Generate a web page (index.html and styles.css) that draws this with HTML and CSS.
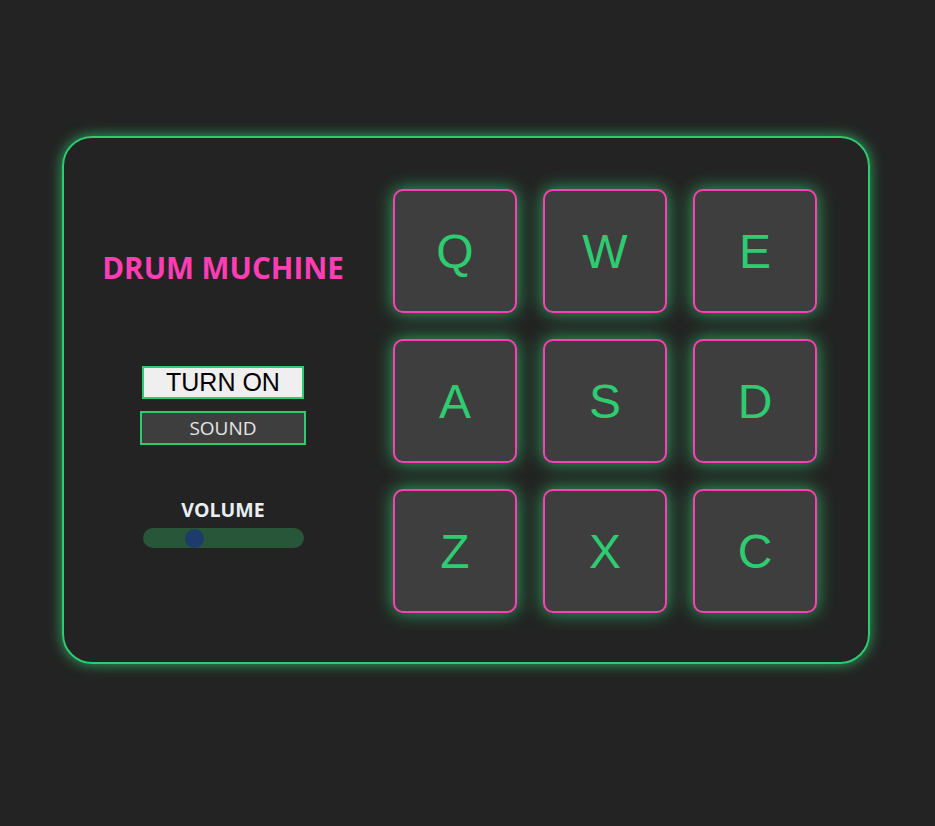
FILE: index.html
```html
<!DOCTYPE html>
<html>
<head>
<meta charset="utf-8">
<link rel="stylesheet" href="styles.css">
</head>
<body>
<div class="machine">
  <div class="controls">
    <h1 class="title">DRUM MUCHINE</h1>
    <button class="power">TURN ON</button>
    <div class="display">SOUND</div>
    <div class="volume-label">VOLUME</div>
    <div class="slider"><span class="thumb"></span></div>
  </div>
  <div class="pads">
    <div class="pad">Q</div>
    <div class="pad">W</div>
    <div class="pad">E</div>
    <div class="pad">A</div>
    <div class="pad">S</div>
    <div class="pad">D</div>
    <div class="pad">Z</div>
    <div class="pad">X</div>
    <div class="pad">C</div>
  </div>
</div>
</body>
</html>
```
FILE: styles.css
```css
html, body {
  margin: 0;
  padding: 0;
  background: #232323;
  height: 100%;
}
body {
  padding-top: 136px;
  padding-left: 62px;
  box-sizing: border-box;
}
.machine {
  width: 808px;
  height: 528px;
  box-sizing: border-box;
  border: 2px solid #2ecc71;
  border-radius: 30px;
  box-shadow: 0 0 14px rgba(46, 204, 113, 0.8);
  display: flex;
  padding: 51px 49px 0 51px;
}
.controls {
  width: 216px;
  display: flex;
  flex-direction: column;
  align-items: center;
  font-family: "Open Sans", sans-serif;
  margin-right: 62px;
}
.title {
  margin: 60px 0 0 0;
  font-size: 29.6px;
  line-height: 38px;
  font-weight: 700;
  color: #ff3db4;
  white-space: nowrap;
  letter-spacing: 0;
}
.power {
  margin-top: 79px;
  width: 162px;
  height: 33px;
  box-sizing: border-box;
  border: 2px solid #2ecc71;
  background: #efefef;
  font-family: "Liberation Sans", Arial, sans-serif;
  font-size: 25px;
  line-height: 29px;
  padding: 0;
  color: #000;
}
.display {
  margin-top: 12px;
  width: 166px;
  height: 34px;
  box-sizing: border-box;
  border: 2px solid #2ecc71;
  background: #3e3e3e;
  color: #e6e6e6;
  font-size: 19px;
  line-height: 30px;
  text-align: center;
}
.volume-label {
  margin-top: 54px;
  font-size: 19.5px;
  line-height: 22px;
  font-weight: 700;
  color: #e8eef2;
}
.slider {
  position: relative;
  margin-top: 7px;
  width: 161px;
  height: 20px;
  border-radius: 10px;
  background: #285638;
}
.thumb {
  position: absolute;
  left: 42px;
  top: 0.5px;
  width: 19px;
  height: 19px;
  border-radius: 50%;
  background: #1d3c6b;
}
.pads {
  display: grid;
  grid-template-columns: repeat(3, 124px);
  grid-auto-rows: 124px;
  gap: 26px;
  align-content: start;
}
.pad {
  box-sizing: border-box;
  border: 2px solid #ff3db4;
  border-radius: 10px;
  background: #3e3e3e;
  box-shadow: 0 0 18px rgba(46, 204, 113, 0.8);
  color: #2ecc71;
  font-family: "Liberation Sans", Arial, sans-serif;
  font-size: 48px;
  display: flex;
  align-items: center;
  justify-content: center;
}
```
